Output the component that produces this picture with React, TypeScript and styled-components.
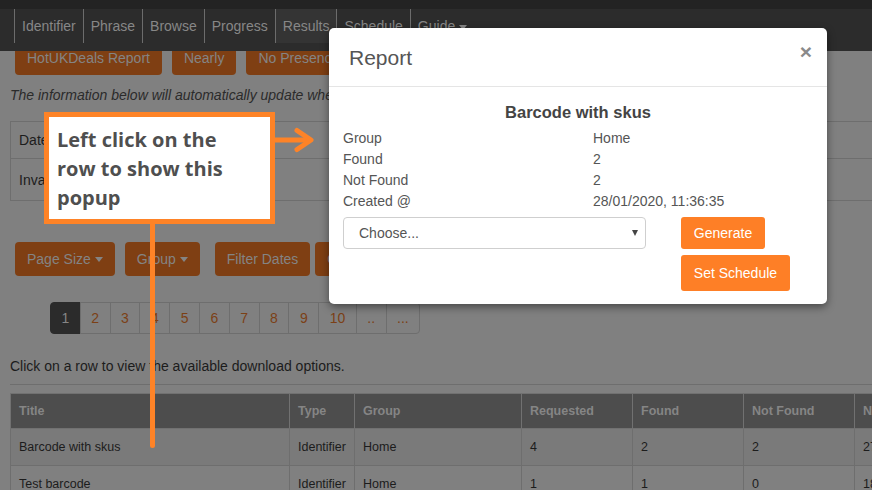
import React from "react";
import styled, { createGlobalStyle } from "styled-components";

const ORANGE = "#fe7f26";
const NOTE = "#fe8327";

/* colours of the page as seen behind the open modal (dimmed to half) */
const DIM = {
  page: "#808080",
  navTop: "#232323",
  nav: "#2c2c2c",
  navActive: "#343434",
  navText: "#878787",
  navSep: "#6c6c6c",
  btn: "#7f3f13",
  btnText: "#848484",
  text: "#1c1c1c",
  italic: "#2b2b2b",
  line: "#6e6e6e",
  pageText: "#7c4016",
  pageActive: "#2b2b2b",
  head: "#4d4d4d",
  headText: "#858585",
  headLine: "#717171",
  stripe: "#7a7a7a",
};

const Global = createGlobalStyle`
  html, body { margin: 0; padding: 0; overflow: hidden; background: ${DIM.page}; }
  body { font-family: "Liberation Sans", Arial, sans-serif; font-size: 14px; color: ${DIM.text}; }
  * { box-sizing: border-box; }
`;

const Page = styled.div`
  position: relative;
  width: 872px;
  height: 490px;
  overflow: hidden;
  background: ${DIM.page};
`;

const Navbar = styled.nav`
  position: absolute;
  top: 0;
  left: 0;
  right: 0;
  z-index: 5;
  height: 51px;
  background: ${DIM.nav};
  border-top: 9px solid ${DIM.navTop};
  padding-left: 14px;
`;

const NavList = styled.ul`
  display: flex;
  margin: 0;
  padding: 0;
  list-style: none;
  height: 34px;
`;

const NavItem = styled.li<{ $active?: boolean }>`
  padding: 0 7px;
  border-left: 1px solid ${DIM.navSep};
  line-height: 34px;
  color: ${DIM.navText};
  font-size: 14px;
  background: ${(p) => (p.$active ? DIM.navActive : "transparent")};
`;

const Caret = styled.span`
  display: inline-block;
  width: 0;
  height: 0;
  margin-left: 4px;
  vertical-align: middle;
  border-top: 5px solid currentColor;
  border-left: 4px solid transparent;
  border-right: 4px solid transparent;
`;

const Content = styled.main`
  position: relative;
  z-index: 1;
  padding: 41px 0 0 10px;
  width: 1100px;
`;

const ButtonRow = styled.div<{ $mt?: number }>`
  display: flex;
  margin: ${(p) => p.$mt ?? 0}px 0 0 5px;
`;

const Btn = styled.button<{ $ml?: number }>`
  display: inline-flex;
  align-items: center;
  height: 34px;
  padding: 0 12px;
  margin-left: ${(p) => p.$ml ?? 0}px;
  border: none;
  border-radius: 4px;
  background: ${DIM.btn};
  color: ${DIM.btnText};
  font-family: "Liberation Sans", Arial, sans-serif;
  font-size: 14px;
  white-space: nowrap;
`;

const Info = styled.p`
  margin: 10px 0 0;
  line-height: 20px;
  font-style: italic;
  color: ${DIM.italic};
`;

const SummaryTable = styled.table`
  margin-top: 16px;
  width: 1000px;
  border-collapse: collapse;
`;

const SummaryCell = styled.td<{ $h: number }>`
  height: ${(p) => p.$h}px;
  padding: 0 8px;
  border: 1px solid ${DIM.line};
  color: ${DIM.text};
  white-space: nowrap;
`;

const Pagination = styled.ul`
  display: flex;
  margin: 26px 0 0 40px;
  padding: 0;
  list-style: none;
`;

const PageLink = styled.li<{ $active?: boolean }>`
  height: 32px;
  padding: 0 10.5px;
  margin-left: -1px;
  line-height: 30px;
  border: 1px solid ${(p) => (p.$active ? DIM.pageActive : DIM.line)};
  background: ${(p) => (p.$active ? DIM.pageActive : DIM.page)};
  color: ${(p) => (p.$active ? DIM.headText : DIM.pageText)};
  font-size: 14px;
  &:first-child { margin-left: 0; border-radius: 4px 0 0 4px; }
  &:last-child { border-radius: 0 4px 4px 0; }
`;

const Hint = styled.p`
  margin: 22px 0 0;
  line-height: 20px;
  color: ${DIM.text};
`;

const Rule = styled.hr`
  margin: 8px 0 0;
  border: none;
  border-top: 1px solid ${DIM.line};
  width: 1000px;
`;

const DataTable = styled.table`
  margin-top: 8px;
  width: 1000px;
  table-layout: fixed;
  border-collapse: collapse;
  font-size: 12.5px;
`;

const Th = styled.th`
  height: 35px;
  padding: 0 8px;
  text-align: left;
  background: ${DIM.head};
  color: ${DIM.headText};
  font-weight: bold;
  border: 1px solid ${DIM.headLine};
  white-space: nowrap;
`;

const Tr = styled.tr<{ $striped?: boolean }>`
  background: ${(p) => (p.$striped ? DIM.stripe : DIM.page)};
`;

const Td = styled.td`
  height: 37px;
  padding: 0 8px;
  border: 1px solid ${DIM.line};
  color: ${DIM.text};
  white-space: nowrap;
`;

const Modal = styled.div`
  position: absolute;
  left: 329px;
  top: 28px;
  z-index: 20;
  width: 498px;
  background: #fff;
  border-radius: 5px;
  box-shadow: 0 3px 9px rgba(0, 0, 0, 0.45);
`;

const ModalHeader = styled.div`
  display: flex;
  justify-content: space-between;
  align-items: flex-start;
  height: 59px;
  padding: 16px 15px 15px 20px;
  border-bottom: 1px solid #e5e5e5;
`;

const ModalTitle = styled.h4`
  margin: 0;
  font-size: 21px;
  line-height: 27px;
  font-weight: normal;
  color: #555;
`;

const Close = styled.span`
  margin-top: -3px;
  font-size: 21px;
  line-height: 21px;
  font-weight: bold;
  color: #8a8a8a;
`;

const ModalBody = styled.div`
  padding: 13px 14px 13px 14px;
`;

const ReportName = styled.h5`
  margin: 0 0 4px;
  text-align: center;
  font-size: 16.5px;
  line-height: 24px;
  font-weight: bold;
  color: #444;
`;

const Details = styled.dl`
  display: grid;
  grid-template-columns: 250px 1fr;
  margin: 0;
  line-height: 21px;
  color: #555;
  dt, dd { margin: 0; }
`;

const FormRow = styled.div`
  display: flex;
  margin-top: 5px;
`;

const SelectWrap = styled.div`
  position: relative;
  width: 303px;
  height: 32px;
`;

const Select = styled.select`
  appearance: none;
  width: 100%;
  height: 32px;
  padding: 0 0 0 15px;
  border: 1px solid #cfcfcf;
  border-radius: 4px;
  background: #fff;
  color: #555;
  font-family: "Liberation Sans", Arial, sans-serif;
  font-size: 14px;
`;

const SelectCaret = styled.span`
  position: absolute;
  right: 8px;
  top: 13px;
  width: 0;
  height: 0;
  border-top: 6px solid #444;
  border-left: 3.5px solid transparent;
  border-right: 3.5px solid transparent;
  pointer-events: none;
`;

const Actions = styled.div`
  display: flex;
  flex-direction: column;
  align-items: flex-start;
  gap: 6px;
  margin-left: 35px;
`;

const ActionBtn = styled.button<{ $h: number }>`
  height: ${(p) => p.$h}px;
  padding: 0 12.8px;
  border: none;
  border-radius: 3px;
  background: ${ORANGE};
  color: #fff;
  font-family: "Liberation Sans", Arial, sans-serif;
  font-size: 14px;
  white-space: nowrap;
`;

const Note = styled.div`
  position: absolute;
  left: 44px;
  top: 112px;
  z-index: 30;
`;

const NoteBox = styled.div`
  width: 231px;
  height: 112px;
  padding: 8px 36px 0 8px;
  border: 5px solid ${NOTE};
  background: #fff;
  font-family: "Open Sans", Lato, sans-serif;
  font-weight: 700;
  font-size: 20px;
  line-height: 29px;
  color: #4f4f4f;
`;

const NoteArrow = styled.svg`
  position: absolute;
  left: 231px;
  top: 14px;
`;

const NoteStem = styled.div`
  position: absolute;
  left: 106px;
  top: 112px;
  width: 5px;
  height: 224px;
  background: ${NOTE};
  border-radius: 0 0 3px 3px;
`;

const navItems = ["Identifier", "Phrase", "Browse", "Progress", "Results", "Schedule"];
const pages = ["1", "2", "3", "4", "5", "6", "7", "8", "9", "10", "..", "..."];
const columns: [string, number][] = [
  ["Title", 279],
  ["Type", 65],
  ["Group", 167],
  ["Requested", 111],
  ["Found", 111],
  ["Not Found", 111],
  ["No Presence", 156],
];
const rows = [
  ["Barcode with skus", "Identifier", "Home", "4", "2", "2", "27"],
  ["Test barcode", "Identifier", "Home", "1", "1", "0", "18"],
];

export default function App() {
  return (
    <Page>
      <Global />
      <Navbar>
        <NavList>
          {navItems.map((n) => (
            <NavItem key={n} $active={n === "Results"}>
              {n}
            </NavItem>
          ))}
          <NavItem>
            Guide
            <Caret />
          </NavItem>
        </NavList>
      </Navbar>

      <Content>
        <ButtonRow>
          <Btn>HotUKDeals Report</Btn>
          <Btn $ml={10}>Nearly</Btn>
          <Btn $ml={10}>No Presence</Btn>
          <Btn $ml={10}>Invalid</Btn>
        </ButtonRow>
        <Info>The information below will automatically update when the report is processed.</Info>
        <SummaryTable>
          <tbody>
            <tr>
              <SummaryCell $h={37}>Date Created</SummaryCell>
              <SummaryCell $h={37}>28/01/2020</SummaryCell>
            </tr>
            <tr>
              <SummaryCell $h={42}>Invalid Barcodes</SummaryCell>
              <SummaryCell $h={42}>0</SummaryCell>
            </tr>
          </tbody>
        </SummaryTable>

        <ButtonRow $mt={41}>
          <Btn>
            Page Size
            <Caret />
          </Btn>
          <Btn $ml={10}>
            Group
            <Caret />
          </Btn>
          <Btn $ml={15}>Filter Dates</Btn>
          <Btn $ml={5}>Clear</Btn>
        </ButtonRow>

        <Pagination>
          {pages.map((p, i) => (
            <PageLink key={i} $active={i === 0}>
              {p}
            </PageLink>
          ))}
        </Pagination>

        <Hint>Click on a row to view the available download options.</Hint>
        <Rule />
        <DataTable>
          <colgroup>
            {columns.map(([c, w]) => (
              <col key={c} style={{ width: w }} />
            ))}
          </colgroup>
          <thead>
            <tr>
              {columns.map(([c]) => (
                <Th key={c}>{c}</Th>
              ))}
            </tr>
          </thead>
          <tbody>
            {rows.map((r, i) => (
              <Tr key={i} $striped={i === 0}>
                {r.map((v, j) => (
                  <Td key={j}>{v}</Td>
                ))}
              </Tr>
            ))}
          </tbody>
        </DataTable>
      </Content>

      <Modal>
        <ModalHeader>
          <ModalTitle>Report</ModalTitle>
          <Close>×</Close>
        </ModalHeader>
        <ModalBody>
          <ReportName>Barcode with skus</ReportName>
          <Details>
            <dt>Group</dt>
            <dd>Home</dd>
            <dt>Found</dt>
            <dd>2</dd>
            <dt>Not Found</dt>
            <dd>2</dd>
            <dt>Created @</dt>
            <dd>28/01/2020, 11:36:35</dd>
          </Details>
          <FormRow>
            <SelectWrap>
              <Select defaultValue="">
                <option value="">Choose...</option>
                <option value="csv">CSV</option>
                <option value="xlsx">Excel</option>
              </Select>
              <SelectCaret />
            </SelectWrap>
            <Actions>
              <ActionBtn $h={32}>Generate</ActionBtn>
              <ActionBtn $h={36}>Set Schedule</ActionBtn>
            </Actions>
          </FormRow>
        </ModalBody>
      </Modal>

      <Note>
        <NoteBox>Left click on the row to show this popup</NoteBox>
        <NoteArrow width="44" height="28" viewBox="0 0 44 28">
          <line x1="0" y1="14" x2="36" y2="14" stroke={NOTE} strokeWidth="5" />
          <polyline
            points="22,4.5 36,14 22,23.5"
            fill="none"
            stroke={NOTE}
            strokeWidth="5"
            strokeLinecap="round"
            strokeLinejoin="round"
          />
        </NoteArrow>
        <NoteStem />
      </Note>
    </Page>
  );
}
